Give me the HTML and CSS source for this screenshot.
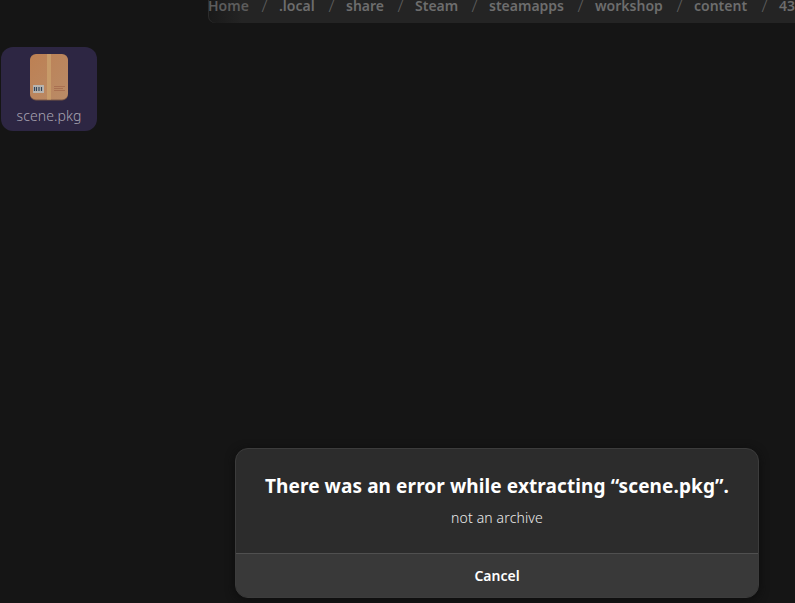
FILE: index.html
```
<!DOCTYPE html>
<html lang="en">
<head>
<meta charset="utf-8">
<title>Files</title>
<link rel="stylesheet" href="styles.css">
</head>
<body>
<nav class="pathbar">
  <span class="crumb"><b class="home">Home</b><i class="slash">/</i></span>
  <span class="crumb"><b>.local</b><i class="slash">/</i></span>
  <span class="crumb"><b>share</b><i class="slash">/</i></span>
  <span class="crumb"><b>Steam</b><i class="slash">/</i></span>
  <span class="crumb"><b>steamapps</b><i class="slash">/</i></span>
  <span class="crumb"><b>workshop</b><i class="slash">/</i></span>
  <span class="crumb"><b>content</b><i class="slash">/</i></span>
  <span class="crumb"><b>43</b></span>
</nav>
<main class="files">
  <div class="file">
    <svg class="file-icon" width="40" height="48" viewBox="0 0 40 48">
      <defs><linearGradient id="box" x1="0" y1="0" x2="1" y2="1"><stop offset="0" stop-color="#bd8053"/><stop offset="1" stop-color="#b98b67"/></linearGradient></defs>
      <rect x="1" y="2" width="38" height="45.500" rx="6" fill="#795746"/>
      <rect x="1" y="1" width="38" height="45.500" rx="6" fill="url(#box)"/>
      <rect x="18" y="1" width="4" height="45.500" fill="#c79b69"/>
      <rect x="4" y="32" width="11" height="8" rx=".5" fill="#b8b4af"/>
      <path d="M5.500 34v4M7.500 34v4M10 34v4M12.500 34v4" stroke="#34465a" stroke-width="1.200"/>
      <path d="M25 33.500h11M25 35.500h9M25 37.500h11" stroke="#a4694c" stroke-width=".8"/>
    </svg>
    <span class="file-name">scene.pkg</span>
  </div>
</main>
<section class="dialog" role="alertdialog">
  <div class="message">
    <h1>There was an error while extracting “scene.pkg”.</h1>
    <p>not an archive</p>
  </div>
  <button class="cancel">Cancel</button>
</section>
</body>
</html>
```
FILE: styles.css
```
* { box-sizing: border-box; }
body {
  margin: 0;
  width: 795px;
  height: 603px;
  overflow: hidden;
  display: flex;
  flex-direction: column;
  background: #151515;
  font-family: "Noto Sans", "Open Sans", sans-serif;
}
.pathbar {
  flex: none;
  height: 23px;
  margin-left: 208px;
  display: grid;
  grid-template-columns: 71px 67px 69px 74px 106px 99px 85px 16px;
  background: linear-gradient(90deg, #191919, #242424 34px);
  border-bottom-left-radius: 7px;
  box-shadow: inset 1px 0 #2b2b2b;
  color: #6d6d6d;
  font-size: 14px;
  line-height: 12px;
}
.crumb {
  display: flex;
  justify-content: space-between;
  padding-right: 11.5px;
  white-space: nowrap;
}
.crumb:last-child { padding-right: 0; }
.crumb b { font-weight: 600; }
.home { color: #5c5c5c; }
.slash {
  color: #5e5e5e;
  font-size: 17px;
  font-style: normal;
  font-weight: 300;
}
.files { flex: 1; padding: 24px 1px; }
.file {
  width: 96px;
  height: 84px;
  padding-top: 6px;
  border-radius: 12px;
  background: #2d2643;
  display: flex;
  flex-direction: column;
  align-items: center;
}
.file-icon { display: block; flex: none; }
.file-name {
  margin-top: 5px;
  color: #aaa5b3;
  font-size: 14px;
  line-height: 20px;
  font-weight: 350;
  letter-spacing: .1px;
}
.dialog {
  flex: none;
  width: 524px;
  height: 150px;
  margin: 0 0 5px 235px;
  overflow: hidden;
  display: flex;
  flex-direction: column;
  border: 1px solid #3c3c3c;
  border-radius: 13px;
  background: #2c2c2c;
  box-shadow: 0 2px 10px #0d0d0d;
}
.message { flex: 1; text-align: center; padding-top: 23px; }
h1 {
  margin: 0;
  color: #fff;
  font-size: 19px;
  line-height: 28px;
  font-weight: 700;
  letter-spacing: .1px;
  white-space: nowrap;
}
p {
  margin: 8px 0 0;
  color: #ebebeb;
  font-size: 14px;
  line-height: 20px;
  font-weight: 350;
  letter-spacing: .15px;
}
.cancel {
  height: 44px;
  padding: 1px 0 0;
  border: 0;
  border-top: 1px solid #505050;
  background: #393939;
  color: #fff;
  font-family: inherit;
  font-size: 14px;
  line-height: 20px;
  font-weight: 600;
}
```
